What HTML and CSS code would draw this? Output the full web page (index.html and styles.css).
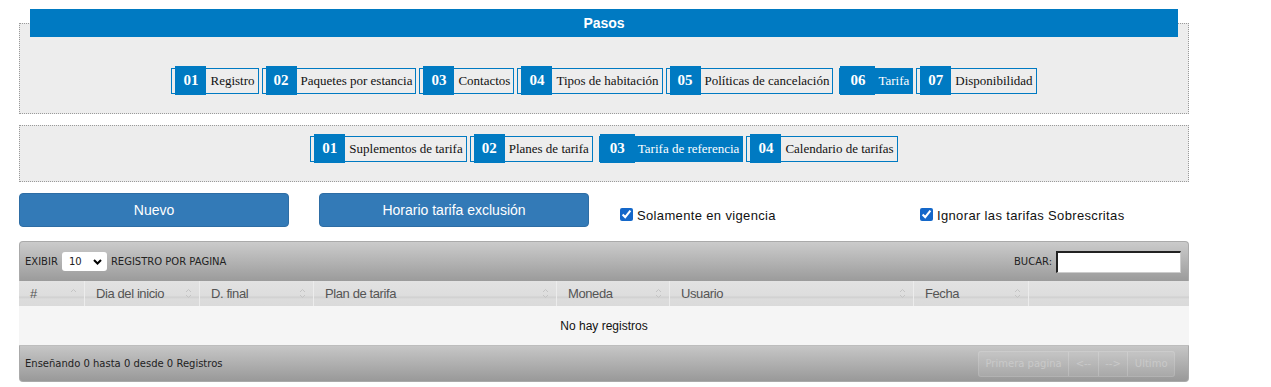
FILE: index.html
```html
<!DOCTYPE html>
<html lang="es">
<head>
  <meta charset="UTF-8">
  <meta name="viewport" content="width=device-width, initial-scale=1.0">
  <title>Tarifas</title>
  <link rel="stylesheet" href="styles.css">
</head>
<body>
  <div class="page">
    <fieldset class="steps-box">
      <legend>Pasos</legend>
      <div class="steps">
        <span class="step"><b class="num">01</b>Registro</span>
        <span class="step"><b class="num">02</b>Paquetes por estancia</span>
        <span class="step"><b class="num">03</b>Contactos</span>
        <span class="step"><b class="num">04</b>Tipos de habitación</span>
        <span class="step"><b class="num">05</b>Políticas de cancelación</span>
        <span class="step active"><b class="num">06</b>Tarifa</span>
        <span class="step"><b class="num">07</b>Disponibilidad</span>
      </div>
    </fieldset>

    <div class="steps-box sub">
      <div class="steps">
        <span class="step"><b class="num">01</b>Suplementos de tarifa</span>
        <span class="step"><b class="num">02</b>Planes de tarifa</span>
        <span class="step active"><b class="num">03</b>Tarifa de referencia</span>
        <span class="step"><b class="num">04</b>Calendario de tarifas</span>
      </div>
    </div>

    <div class="actions">
      <button class="btn" type="button">Nuevo</button>
      <button class="btn" type="button">Horario tarifa exclusión</button>
      <label class="check"><input type="checkbox" checked>Solamente en vigencia</label>
      <label class="check"><input type="checkbox" checked>Ignorar las tarifas Sobrescritas</label>
    </div>

    <div class="grid-box">
      <div class="toolbar">
        <div class="length">
          EXIBIR
          <span class="select-wrap">
            <select><option>10</option><option>25</option><option>50</option></select>
            <svg class="chev" width="9" height="6" viewBox="0 0 9 6"><path d="M1 1 L4.5 4.5 L8 1" fill="none" stroke="#000" stroke-width="2"/></svg>
          </span>
          REGISTRO POR PAGINA
        </div>
        <label class="search">BUCAR: <input type="text"></label>
      </div>

      <div class="thead">
        <div class="th">#<svg class="sort" width="7" height="11" viewBox="0 0 7 11"><path d="M1 4 L3.5 1.5 L6 4" fill="none" stroke="#c4c4c4"/></svg></div>
        <div class="th">Dia del inicio<svg class="sort" width="7" height="11" viewBox="0 0 7 11"><path d="M1 4 L3.5 1.5 L6 4 M1 7 L3.5 9.5 L6 7" fill="none" stroke="#c4c4c4"/></svg></div>
        <div class="th">D. final<svg class="sort" width="7" height="11" viewBox="0 0 7 11"><path d="M1 4 L3.5 1.5 L6 4 M1 7 L3.5 9.5 L6 7" fill="none" stroke="#c4c4c4"/></svg></div>
        <div class="th">Plan de tarifa<svg class="sort" width="7" height="11" viewBox="0 0 7 11"><path d="M1 4 L3.5 1.5 L6 4 M1 7 L3.5 9.5 L6 7" fill="none" stroke="#c4c4c4"/></svg></div>
        <div class="th">Moneda<svg class="sort" width="7" height="11" viewBox="0 0 7 11"><path d="M1 4 L3.5 1.5 L6 4 M1 7 L3.5 9.5 L6 7" fill="none" stroke="#c4c4c4"/></svg></div>
        <div class="th">Usuario<svg class="sort" width="7" height="11" viewBox="0 0 7 11"><path d="M1 4 L3.5 1.5 L6 4 M1 7 L3.5 9.5 L6 7" fill="none" stroke="#c4c4c4"/></svg></div>
        <div class="th">Fecha<svg class="sort" width="7" height="11" viewBox="0 0 7 11"><path d="M1 4 L3.5 1.5 L6 4 M1 7 L3.5 9.5 L6 7" fill="none" stroke="#c4c4c4"/></svg></div>
        <div class="th last"></div>
      </div>

      <div class="tbody">No hay registros</div>

      <div class="tfoot">
        <span class="info">Enseñando 0 hasta 0 desde 0 Registros</span>
        <div class="pager">
          <span>Primera pagina</span>
          <span>&lt;--</span>
          <span>--&gt;</span>
          <span>Ultimo</span>
        </div>
      </div>
    </div>
  </div>
</body>
</html>
```

FILE: styles.css
```css
body { margin: 0; background: #fff; font-family: "Liberation Sans", Arial, sans-serif; }
.page { width: 1170px; padding: 9px 19px 0; }

/* pasos */
.steps-box { margin: 0; padding: 0 10px 18px; border: 1px dotted #9a9a9a; background: #ededed; }
.steps-box legend { width: 100%; box-sizing: border-box; padding: 0; height: 28px; line-height: 28px; background: #007ac2; color: #fff; font-weight: bold; font-size: 14px; text-align: center; }
.steps-box .steps { margin-top: 29px; }
.steps-box.sub { margin-top: 11px; padding: 8px 10px 18px; }
.steps-box.sub .steps { margin-top: 0; }

.steps { display: flex; justify-content: center; align-items: center; gap: 3px; height: 29px; }
.step { display: inline-flex; align-items: center; height: 26px; box-sizing: border-box; border: 1px solid #007ac2; padding: 0 3px; font-family: "Liberation Serif", "Times New Roman", serif; font-size: 13px; color: #111; white-space: nowrap; }
.step .num { display: flex; align-items: center; height: 29px; padding: 0 8px; margin-right: 4px; background: #007ac2; color: #fff; font-size: 15px; font-weight: bold; }
.step.active { background: #007ac2; color: #fff; padding-left: 0; margin-left: 3px; }
.step.active .num { padding: 0 10px; margin-right: 3px; }

/* acciones */
.actions { display: grid; grid-template-columns: repeat(4, 270px); column-gap: 30px; margin-top: 11px; }
.btn { height: 34px; border: 1px solid #2e6da4; border-radius: 4px; background: #337ab7; color: #fff; font-family: "Liberation Sans", Arial, sans-serif; font-size: 14px; }
.check { display: flex; align-items: center; padding-top: 14px; height: 16px; font-size: 13px; letter-spacing: 0.35px; color: #111; }
.check input { width: 13px; height: 13px; margin: -1px 4px 0 1px; accent-color: #1467c9; }

/* grilla */
.grid-box { margin-top: 14px; }
.toolbar { display: flex; justify-content: space-between; align-items: center; height: 40px; box-sizing: border-box; padding: 0 7px 0 5px; border: 1px solid #aaa; border-bottom: 0; border-radius: 4px 4px 0 0; background: linear-gradient(#cbcbcb, #9b9b9b); font-family: "DejaVu Sans", Verdana, sans-serif; font-size: 10px; color: #222; }
.length { display: flex; align-items: center; gap: 4px; }
.select-wrap { position: relative; display: inline-block; }
.select-wrap select { appearance: none; width: 45px; height: 19px; border: 0; border-radius: 3px; background: #fff; padding: 0 0 0 7px; font-family: "DejaVu Sans", Verdana, sans-serif; font-size: 10px; color: #222; }
.select-wrap .chev { position: absolute; right: 5px; top: 7px; pointer-events: none; }
.search { display: flex; align-items: center; gap: 4px; }
.search input { width: 125px; height: 22px; box-sizing: border-box; border: 1px solid #ccc; border-top: 2px solid #222; border-left: 2px solid #222; background: #fff; padding: 0; }

.thead { display: grid; grid-template-columns: 66px 115px 114px 243px 113px 244px 115px 1fr; height: 25px; background: linear-gradient(#e2e2e2 0%, #dddddd 60%, #cfcfcf 64%, #dcdcdc 72%, #dadada 100%); }
.th { display: flex; align-items: center; justify-content: space-between; padding: 0 7px 0 11px; border-right: 1px solid #ececec; font-size: 13px; letter-spacing: -0.4px; color: #555; }
.th.last { border-right: 0; }

.tbody { height: 40px; line-height: 40px; text-align: center; background: #f5f5f5; border-bottom: 1px solid #bdbdbd; box-sizing: border-box; font-size: 12px; color: #111; }

.tfoot { display: flex; justify-content: space-between; align-items: center; height: 36px; box-sizing: border-box; padding: 0 13px 0 5px; border: 1px solid #aaa; border-top: 0; border-radius: 0 0 4px 4px; background: linear-gradient(#c6c6c6, #999); font-family: "DejaVu Sans", Verdana, sans-serif; font-size: 10px; color: #222; }
.pager { display: flex; height: 24px; border: 1px solid rgba(255,255,255,0.12); border-radius: 3px; background: rgba(255,255,255,0.1); }
.pager span { display: flex; align-items: center; padding: 0 6.5px; border-left: 1px solid rgba(255,255,255,0.18); color: #c9c9c9; font-size: 10px; }
.pager span:first-child { border-left: 0; }
```
